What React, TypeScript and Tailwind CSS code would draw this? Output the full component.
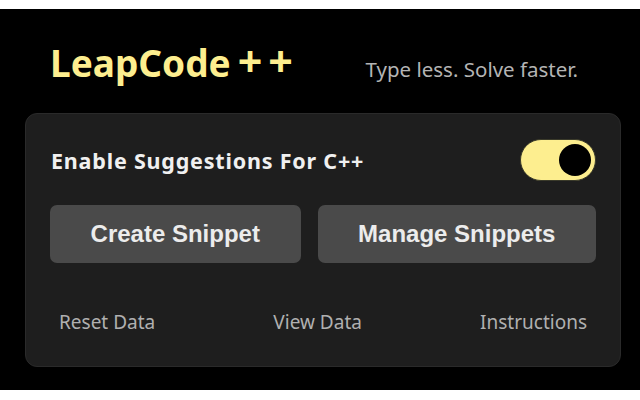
import { useState } from "react"

const LINKS = ["Reset Data", "View Data", "Instructions"]

export default function App() {
  const [enabled, setEnabled] = useState(true)

  return (
    <div className="min-h-[400px] bg-white pt-[9px] font-['Noto_Sans',sans-serif]">
      <div className="h-[381px] bg-black">
        {/* header */}
        <div className="flex items-baseline justify-between pl-[50px] pr-[62px] pt-[30px]">
          <h1 className="text-[37px] leading-[48px] font-bold text-[#fdee8f]">
            LeapCode<span className="ml-[7px] text-[43px] leading-none tracking-[6px]">++</span>
          </h1>
          <p className="text-[20.5px] text-[#b4b4b4]">Type less. Solve faster.</p>
        </div>

        {/* main card */}
        <div className="ml-[25px] mt-[26px] h-[254px] w-[596px] rounded-[12px] border border-[#2a2a2a] bg-[#1e1e1e] px-[24px] pt-[25px]">
          <div className="flex h-[42px] items-center justify-between pl-[1px]">
            <span className="mt-[2px] text-[21.5px] font-bold tracking-[0.8px] text-[#f0f0f0]">
              Enable Suggestions For C++
            </span>
            <button
              onClick={() => setEnabled(!enabled)}
              className="flex h-[42px] w-[76px] items-center rounded-full border border-[#3a3a2a] bg-[#fdee8f] px-[4px]"
            >
              <span
                className={
                  enabled
                    ? "ml-auto h-[32px] w-[32px] rounded-full bg-black"
                    : "h-[32px] w-[32px] rounded-full bg-black"
                }
              />
            </button>
          </div>

          <div className="mt-[24px] flex gap-[17px]">
            <button className="h-[58px] flex-auto rounded-[7px] bg-[#4a4a4a] font-['Liberation_Sans',Arial,sans-serif] text-[24px] font-bold text-[#ececec]">
              Create Snippet
            </button>
            <button className="h-[58px] flex-auto rounded-[7px] bg-[#4a4a4a] font-['Liberation_Sans',Arial,sans-serif] text-[24px] font-bold text-[#ececec]">
              Manage Snippets
            </button>
          </div>

          <div className="mt-[45px] flex justify-between">
            {LINKS.map((l) => (
              <button key={l} className="px-[9px] text-[19px] leading-[28px] text-[#b0b0b0]">
                {l}
              </button>
            ))}
          </div>
        </div>
      </div>
    </div>
  )
}
